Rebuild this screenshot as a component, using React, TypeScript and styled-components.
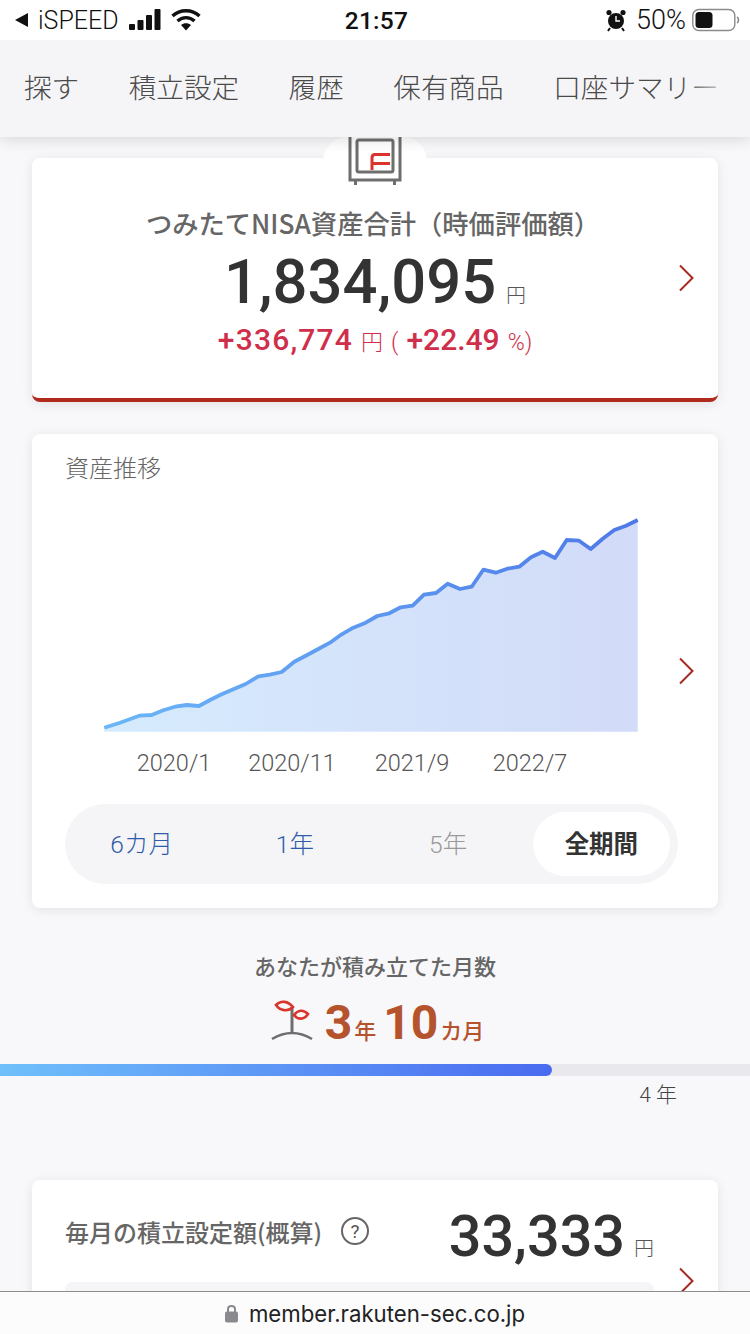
import React from 'react';
import styled, { createGlobalStyle } from 'styled-components';

const GlobalStyle = createGlobalStyle`
  html, body {
    margin: 0;
    padding: 0;
    background: #f8f8fb;
  }
  * {
    box-sizing: border-box;
  }
`;

const FONT = `Roboto, "Noto Sans CJK JP", sans-serif`;
const CJK = `"Noto Sans CJK JP", Roboto, sans-serif`;

const Page = styled.div`
  position: relative;
  width: 750px;
  height: 1334px;
  overflow: hidden;
  background: #f8f8fb;
  font-family: ${FONT};
`;

// iOS status bar
const StatusBar = styled.div`
  position: relative;
  z-index: 3;
  height: 40px;
  background: #fff;
  display: grid;
  grid-template-columns: 1fr auto 1fr;
  align-items: center;
  padding: 0 8px 0 14px;
  color: #111;
`;

const StatusLeft = styled.div`
  display: flex;
  align-items: center;
  gap: 10px;
  font-size: 25px;
  font-weight: 300;
`;

const StatusRight = styled.div`
  display: flex;
  align-items: center;
  justify-content: flex-end;
  gap: 9px;
  font-size: 27px;
  font-weight: 300;
`;

const Clock = styled.div`
  font-size: 24.5px;
  font-weight: 500;
  letter-spacing: 0.3px;
  margin-right: 3px;
`;

const Nav = styled.nav`
  position: relative;
  z-index: 2;
  height: 97px;
  background: #f5f5f8;
  box-shadow: 0 3px 14px rgba(0, 0, 0, 0.13);
  display: flex;
  align-items: center;
  gap: 49.5px;
  padding: 0 0 6px 24px;
  overflow: hidden;
  white-space: nowrap;
`;

const NavItem = styled.div`
  flex-shrink: 0;
  font-family: ${CJK};
  font-size: 27.6px;
  font-weight: 300;
  color: #4a4a4a;
`;

const NavFade = styled.div`
  position: absolute;
  top: 0;
  right: 0;
  width: 70px;
  height: 100%;
  background: linear-gradient(to right, rgba(245, 245, 248, 0), rgba(245, 245, 248, 0.75) 60%, #f5f5f8);
`;

const Content = styled.main`
  padding: 21px 32px 0;
`;

const Card = styled.section`
  position: relative;
  background: #fff;
  border-radius: 8px;
  box-shadow: 0 2px 12px rgba(0, 0, 0, 0.09);
`;

const SummaryCard = styled(Card)`
  height: 244px;
  border-bottom: 4px solid #b02a1e;
  padding-top: 47px;
  text-align: center;
`;

const SafeBump = styled.div`
  position: absolute;
  top: -21px;
  left: 291px;
  width: 104px;
  height: 60px;
  border-radius: 24px 24px 0 0;
  background: #fff;
  display: flex;
  justify-content: center;
`;

const SummaryTitle = styled.div`
  margin-right: 4px;
  font-family: ${CJK};
  font-size: 26.3px;
  line-height: 36px;
  font-weight: 500;
  color: #666;
`;

const TotalRow = styled.div`
  margin-top: 11px;
  height: 60px;
  display: flex;
  justify-content: center;
  align-items: baseline;
  gap: 10px;
  color: #333;
  font-size: 61.5px;
  line-height: 60px;
  font-weight: 500;
`;

const Yen = styled.span<{ $size: number; $color?: string }>`
  font-family: ${CJK};
  font-size: ${props => props.$size}px;
  font-weight: 300;
  color: ${props => props.$color || '#555'};
`;

const DeltaRow = styled.div`
  margin-top: 11px;
  display: flex;
  justify-content: center;
  align-items: baseline;
  gap: 8px;
  color: #cf2f4b;
  font-size: 30px;
  line-height: 34px;
  font-weight: 500;
`;

const DeltaAmount = styled.span`
  letter-spacing: 1.2px;
`;

const DeltaThin = styled.span`
  font-size: 23px;
  font-weight: 300;
`;

const Chevron = styled.svg<{ $top: number }>`
  position: absolute;
  right: 23px;
  top: ${props => props.$top}px;
  width: 17px;
  height: 28px;
`;

const ChartCard = styled(Card)`
  margin-top: 32px;
  height: 474px;
  padding: 18px 32px 0 33px;
`;

const ChartTitle = styled.div`
  font-family: ${CJK};
  font-size: 24px;
  line-height: 30px;
  font-weight: 300;
  color: #666;
`;

const ChartSvg = styled.svg`
  display: block;
  margin-top: 28px;
  width: 621px;
  height: 222px;
`;

const AxisRow = styled.div`
  position: relative;
  height: 30px;
  margin-top: 16px;
`;

const AxisLabel = styled.span<{ $center: number }>`
  position: absolute;
  top: 0;
  left: ${props => props.$center}px;
  transform: translateX(-50%);
  font-size: 23.5px;
  line-height: 30px;
  font-weight: 300;
  color: #555;
`;

const Segments = styled.div`
  margin-top: 26px;
  width: 613px;
  height: 80px;
  border-radius: 40px;
  background: #f5f5f8;
  display: grid;
  grid-template-columns: repeat(4, 1fr);
  align-items: center;
`;

const Segment = styled.div<{ $color: string; $active?: boolean }>`
  height: 64px;
  padding-bottom: 4px;
  display: flex;
  align-items: center;
  justify-content: center;
  font-family: ${FONT};
  font-size: 24.5px;
  font-weight: ${props => (props.$active ? 700 : 300)};
  color: ${props => props.$color};
  border-radius: 32px;
  background: ${props => (props.$active ? '#fff' : 'transparent')};
  margin-right: ${props => (props.$active ? '8px' : '0')};
  margin-left: ${props => (props.$active ? '8px' : '0')};
`;

const MonthsSection = styled.section`
  margin: 41px -32px 0;
`;

const MonthsTitle = styled.div`
  text-align: center;
  font-family: ${CJK};
  font-size: 22px;
  line-height: 32px;
  font-weight: 500;
  color: #666;
`;

const MonthsValue = styled.div`
  margin-top: 12px;
  margin-left: 5px;
  height: 48px;
  display: flex;
  justify-content: center;
  align-items: flex-end;
  gap: 12px;
  color: #b5532d;
`;

const MonthsText = styled.div`
  display: flex;
  align-items: baseline;
  margin-bottom: -12px;
  font-size: 48px;
  line-height: 48px;
  font-weight: 700;
`;

const MonthsUnit = styled.span<{ $gap?: number }>`
  font-family: ${CJK};
  font-size: 22px;
  font-weight: 500;
  margin-left: 2px;
  margin-right: ${props => props.$gap || 0}px;
`;

const Progress = styled.div`
  margin-top: 23px;
  height: 12px;
  background: #e9e9ed;
`;

const ProgressFill = styled.div`
  height: 100%;
  border-radius: 0 6px 6px 0;
  background: linear-gradient(to right, #6fc0fb, #4a6bf0);
`;

const ProgressEnd = styled.div`
  margin-top: 7px;
  padding-right: 73px;
  text-align: right;
  font-family: ${FONT};
  font-size: 21px;
  line-height: 24px;
  font-weight: 300;
  color: #444;
`;

const SettingCard = styled(Card)`
  margin-top: 73px;
  height: 200px;
  padding: 16px 64px 0 33px;
`;

const SettingRow = styled.div`
  height: 78px;
  display: flex;
  align-items: center;
`;

const SettingLabel = styled.div`
  margin-bottom: 8px;
  font-family: ${CJK};
  font-size: 24px;
  font-weight: 500;
  color: #666;
  white-space: nowrap;
`;

const HelpIcon = styled.div`
  margin-bottom: 8px;
  margin-left: 19px;
  width: 28px;
  height: 28px;
  border: 2px solid #666;
  border-radius: 50%;
  display: flex;
  align-items: center;
  justify-content: center;
  font-size: 19px;
  color: #555;
`;

const SettingAmount = styled.div`
  margin-left: auto;
  margin-top: 2px;
  display: flex;
  align-items: baseline;
  gap: 9px;
  color: #333;
  font-size: 57.5px;
  font-weight: 500;
`;

const SettingDetail = styled.div`
  margin-top: 8px;
  height: 60px;
  border-radius: 8px;
  background: #f5f5f8;
`;

// Safari address bar sits over the page
const AddressBar = styled.div`
  position: absolute;
  left: 0;
  right: 0;
  bottom: 0;
  z-index: 4;
  height: 43px;
  border-top: 1px solid #8d8d8d;
  background: #fcfcfd;
  display: flex;
  align-items: center;
  justify-content: center;
  gap: 11px;
  font-family: "Inter", ${FONT};
  font-size: 22.2px;
  color: #222;
`;

const chartPoints: [number, number][] = [
  [104.3, 727.7], [120, 722.7], [139.3, 715.7], [151.7, 715], [163.3, 710.3], [175, 706.7],
  [186.7, 705], [199, 706], [210, 700], [221.7, 694.3], [233.3, 689.3], [245.7, 684],
  [258.3, 676.3], [270, 674.7], [281.7, 672], [294.3, 661.7], [306.7, 655.3], [318.3, 649],
  [330, 642.7], [341.7, 634.3], [353.3, 627.7], [365.7, 622.7], [377.3, 616], [389.3, 613.3],
  [400.7, 607.3], [412.7, 605.7], [424, 594.7], [436, 593], [447.7, 583.7], [460, 589],
  [471.7, 586.7], [483.3, 569.7], [495.7, 572.7], [507.3, 568.7], [519.3, 566.7], [531, 557.3],
  [542.7, 551.7], [555, 558], [566.7, 540], [579, 540.7], [590.7, 549], [602.7, 538.7],
  [614.3, 530], [626, 525.7], [637.7, 520],
];

// svg origin on the page
const CHART_X = 65;
const CHART_Y = 510;
const BASE_Y = 731.7;

const linePoints = chartPoints.map(([x, y]) => `${x - CHART_X},${y - CHART_Y}`).join(' ');
const areaPoints = `${chartPoints[0][0] - CHART_X},${BASE_Y - CHART_Y} ${linePoints} ${
  chartPoints[chartPoints.length - 1][0] - CHART_X
},${BASE_Y - CHART_Y}`;

const ChevronIcon: React.FC<{ top: number }> = ({ top }) => (
  <Chevron $top={top} viewBox="0 0 17 28">
    <path d="M2 1.5 L14.5 14 L2 26.5" fill="none" stroke="#a52a22" strokeWidth="2" />
  </Chevron>
);

const App: React.FC = () => {
  return (
    <Page>
      <GlobalStyle />
      <StatusBar>
        <StatusLeft>
          <svg width="15" height="16" viewBox="0 0 15 16">
            <path d="M14 1 V15 L1 8 Z" fill="#111" />
          </svg>
          <span style={{ marginLeft: -1 }}>iSPEED</span>
          <svg width="32" height="22" viewBox="0 0 32 22">
            <rect x="0" y="15" width="6" height="6" rx="1" fill="#111" />
            <rect x="8.5" y="11" width="6" height="10" rx="1" fill="#111" />
            <rect x="17" y="6" width="6" height="15" rx="1" fill="#111" />
            <rect x="25.5" y="0" width="6" height="21" rx="1" fill="#111" />
          </svg>
          <svg width="30" height="24" viewBox="0 0 30 24">
            <path d="M1.5 8 C9 1 21 1 28.5 8" fill="none" stroke="#111" strokeWidth="3.4" />
            <path d="M6.5 13 C11.5 8.5 18.5 8.5 23.5 13" fill="none" stroke="#111" strokeWidth="3.4" />
            <path d="M10 17 C13 14.6 17 14.6 20 17 L15 22.5 Z" fill="#111" />
          </svg>
        </StatusLeft>
        <Clock>21:57</Clock>
        <StatusRight>
          <svg width="22" height="24" viewBox="0 0 22 24">
            <circle cx="11" cy="13" r="8" fill="#111" />
            <circle cx="4" cy="4.5" r="2.6" fill="#111" />
            <circle cx="18" cy="4.5" r="2.6" fill="#111" />
            <path d="M11 8 V13 H15" fill="none" stroke="#fff" strokeWidth="1.4" />
            <path d="M5 20 L3 23 M17 20 L19 23" stroke="#111" strokeWidth="2" />
          </svg>
          <span>50%</span>
          <svg width="50" height="24" viewBox="0 0 50 24" style={{ marginLeft: -3 }}>
            <rect x="0.8" y="1.5" width="42" height="21" rx="6" fill="none" stroke="#8a8a8a" strokeWidth="1.4" />
            <rect x="3.5" y="4" width="17" height="16" rx="3.5" fill="#111" />
            <path d="M45 9 C47 10 47 14 45 15" fill="none" stroke="#8a8a8a" strokeWidth="1.6" />
          </svg>
        </StatusRight>
      </StatusBar>

      <Nav>
        <NavItem>探す</NavItem>
        <NavItem>積立設定</NavItem>
        <NavItem>履歴</NavItem>
        <NavItem>保有商品</NavItem>
        <NavItem>口座サマリー</NavItem>
        <NavFade />
      </Nav>

      <Content>
        <SummaryCard>
          <SafeBump>
            <svg width="56" height="48" viewBox="0 0 56 48">
              <path d="M3 0 V43 H53 V0" fill="none" stroke="#6e6e6e" strokeWidth="3" />
              <rect x="10" y="3" width="36" height="32" rx="2" fill="none" stroke="#6e6e6e" strokeWidth="3" />
              <path d="M8.5 43 V48 M47.5 43 V48" stroke="#6e6e6e" strokeWidth="3" />
              <path d="M25 33 V21 C25 18.5 26 17.5 28 17.5 H43 M26 26.5 H43" fill="none" stroke="#d9352c" strokeWidth="3" />
            </svg>
          </SafeBump>
          <SummaryTitle>つみたてNISA資産合計（時価評価額）</SummaryTitle>
          <TotalRow>
            1,834,095
            <Yen $size={20}>円</Yen>
          </TotalRow>
          <DeltaRow>
            <DeltaAmount>+336,774</DeltaAmount>
            <Yen $size={22} $color="#cf2f4b">円</Yen>
            <DeltaThin>(</DeltaThin>
            +22.49
            <DeltaThin>%)</DeltaThin>
          </DeltaRow>
          <ChevronIcon top={106} />
        </SummaryCard>

        <ChartCard>
          <ChartTitle>資産推移</ChartTitle>
          <ChartSvg viewBox="0 0 621 222">
            <defs>
              <linearGradient id="areaFill" x1="0" y1="0" x2="1" y2="0">
                <stop offset="0" stopColor="#d6ebfd" />
                <stop offset="1" stopColor="#d2dbf8" />
              </linearGradient>
              <linearGradient id="lineStroke" gradientUnits="userSpaceOnUse" x1="39" y1="0" x2="573" y2="0">
                <stop offset="0" stopColor="#6cb6f7" />
                <stop offset="1" stopColor="#4e78e8" />
              </linearGradient>
            </defs>
            <polygon points={areaPoints} fill="url(#areaFill)" />
            <polyline points={linePoints} fill="none" stroke="url(#lineStroke)" strokeWidth="3.8" strokeLinejoin="round" />
          </ChartSvg>
          <AxisRow>
            <AxisLabel $center={109}>2020/1</AxisLabel>
            <AxisLabel $center={227}>2020/11</AxisLabel>
            <AxisLabel $center={347}>2021/9</AxisLabel>
            <AxisLabel $center={465}>2022/7</AxisLabel>
          </AxisRow>
          <Segments>
            <Segment $color="#2f5ca8">6カ月</Segment>
            <Segment $color="#2f5ca8">1年</Segment>
            <Segment $color="#999">5年</Segment>
            <Segment $color="#333" $active>全期間</Segment>
          </Segments>
          <ChevronIcon top={223} />
        </ChartCard>

        <MonthsSection>
          <MonthsTitle>あなたが積み立てた月数</MonthsTitle>
          <MonthsValue>
            <svg width="42" height="42" viewBox="0 0 42 42">
              <path d="M21 9 V34" stroke="#6e6e6e" strokeWidth="3" />
              <path d="M1 40 Q21 28 41 40" fill="none" stroke="#6e6e6e" strokeWidth="2.6" />
              <path d="M22 8 C17 2 10 1 5 6 C9 12 17 13 22 8 Z" fill="none" stroke="#d9352c" strokeWidth="2.6" />
              <path d="M23 16 C27 11 32 10 37 15 C33 21 27 21 23 16 Z" fill="none" stroke="#d9352c" strokeWidth="2.6" />
            </svg>
            <MonthsText>
              3<MonthsUnit $gap={7}>年</MonthsUnit>
              10<MonthsUnit>カ月</MonthsUnit>
            </MonthsText>
          </MonthsValue>
          <Progress>
            <ProgressFill style={{ width: `${(552 / 750) * 100}%` }} />
          </Progress>
          <ProgressEnd>4 年</ProgressEnd>
        </MonthsSection>

        <SettingCard>
          <SettingRow>
            <SettingLabel>毎月の積立設定額(概算)</SettingLabel>
            <HelpIcon>?</HelpIcon>
            <SettingAmount>
              33,333
              <Yen $size={20}>円</Yen>
            </SettingAmount>
          </SettingRow>
          <SettingDetail />
          <ChevronIcon top={87} />
        </SettingCard>
      </Content>

      <AddressBar>
        <svg width="13" height="19" viewBox="0 0 13 19">
          <rect x="0" y="7.5" width="13" height="11" rx="2" fill="#8a8a8e" />
          <path d="M3 8 V5 C3 1 10 1 10 5 V8" fill="none" stroke="#8a8a8e" strokeWidth="2" />
        </svg>
        member.rakuten-sec.co.jp
      </AddressBar>
    </Page>
  );
};

export default App;
